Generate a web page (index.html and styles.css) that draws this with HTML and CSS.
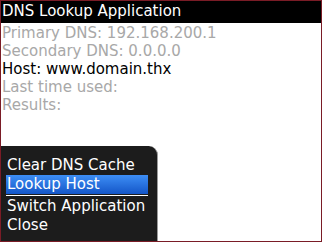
FILE: index.html
```html
<!DOCTYPE html>
<html lang="en">
<head>
    <meta charset="UTF-8">
    <title>DNS Lookup Application</title>
    <link rel="stylesheet" href="styles.css">
</head>
<body>
    <div class="screen">
        <div class="title-bar">DNS Lookup Application</div>
        <div class="fields">
            <div class="field dim">Primary DNS: 192.168.200.1</div>
            <div class="field dim">Secondary DNS: 0.0.0.0</div>
            <div class="field">Host: www.domain.thx</div>
            <div class="field dim">Last time used:</div>
            <div class="field dim">Results:</div>
        </div>

        <div class="menu">
            <div class="menu-item">Clear DNS Cache</div>
            <div class="menu-item selected">Lookup Host</div>
            <div class="menu-sep"></div>
            <div class="menu-item">Switch Application</div>
            <div class="menu-item">Close</div>
        </div>
    </div>
</body>
</html>
```

FILE: styles.css
```css
* {
    margin: 0;
    padding: 0;
    box-sizing: border-box;
}

body {
    width: 322px;
    height: 242px;
    font-family: "DejaVu Sans", sans-serif;
    background: #ffffff;
}

.screen {
    position: relative;
    width: 322px;
    height: 242px;
    border: 1px solid #7a1c26;
    background: #ffffff;
    overflow: hidden;
}

.title-bar {
    background: #000000;
    color: #ffffff;
    font-size: 15px;
    height: 22px;
    line-height: 21px;
    padding-left: 1px;
}

.fields {
    padding: 1px 0 0 1px;
}

.field {
    font-size: 15px;
    line-height: 18px;
    color: #000000;
}

.field.dim {
    color: #a8a8a8;
}

.menu {
    position: absolute;
    left: 0;
    bottom: 0;
    width: 157px;
    height: 95px;
    background: #1c1c1c;
    border-top-right-radius: 9px;
    border-right: 1px solid #9a9a9a;
    padding: 10px 9px 0 5px;
    color: #ffffff;
}

.menu-item {
    font-size: 15px;
    line-height: 19px;
    padding-left: 1px;
}

.menu-item.selected {
    background: linear-gradient(#3d8ef5, #1456c8);
}

.menu-sep {
    height: 2px;
    border-top: 1px solid #ffffff;
    margin-top: 1px;
}
```
